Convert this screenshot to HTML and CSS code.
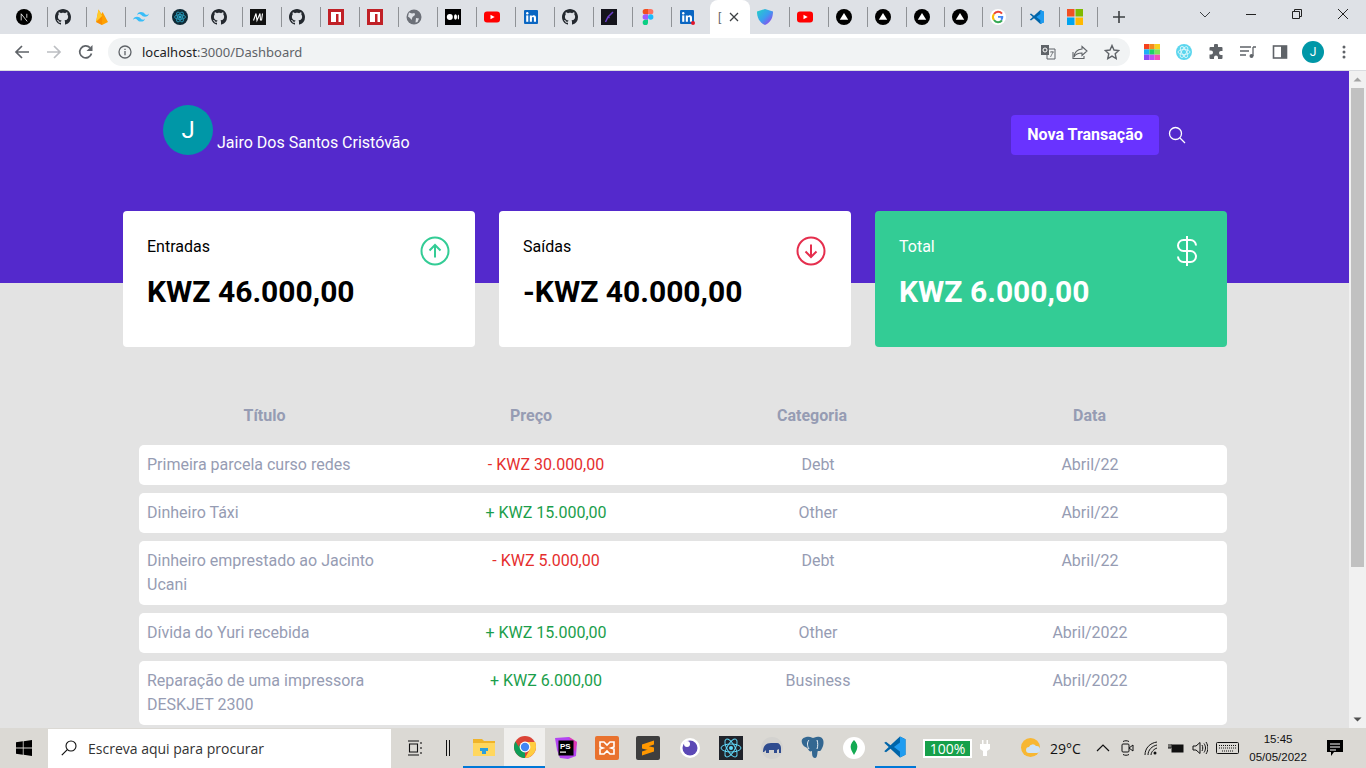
FILE: index.html
```html
<!DOCTYPE html>
<html lang="pt">
<head>
    <meta charset="UTF-8">
    <title>Dashboard</title>
    <link rel="stylesheet" href="styles.css">
</head>
<body>

<svg class="defs" width="0" height="0">
    <symbol id="i-github" viewBox="0 0 16 16"><path fill="#24292f" d="M8 0C3.58 0 0 3.58 0 8c0 3.54 2.29 6.53 5.47 7.59.4.07.55-.17.55-.38 0-.19-.01-.82-.01-1.49-2.01.37-2.53-.49-2.69-.94-.09-.23-.48-.94-.82-1.13-.28-.15-.68-.52-.01-.53.63-.01 1.08.58 1.23.82.72 1.21 1.87.87 2.33.66.07-.52.28-.87.51-1.07-1.78-.2-3.64-.89-3.64-3.95 0-.87.31-1.59.82-2.15-.08-.2-.36-1.02.08-2.12 0 0 .67-.21 2.2.82.64-.18 1.32-.27 2-.27.68 0 1.36.09 2 .27 1.53-1.04 2.2-.82 2.2-.82.44 1.1.16 1.92.08 2.12.51.56.82 1.27.82 2.15 0 3.07-1.87 3.75-3.65 3.95.29.25.54.73.54 1.48 0 1.07-.01 1.93-.01 2.2 0 .21.15.46.55.38A8.013 8.013 0 0016 8c0-4.42-3.58-8-8-8z"/></symbol>
    <symbol id="i-npm" viewBox="0 0 16 16"><rect width="16" height="16" fill="#c12127"/><rect x="3" y="3" width="10" height="10" fill="#fff"/><rect x="8" y="5" width="2.5" height="8" fill="#c12127"/></symbol>
    <symbol id="i-yt" viewBox="0 0 16 16"><rect y="2.5" width="16" height="11" rx="3" fill="#f00"/><path fill="#fff" d="M6.5 5.7l4.2 2.3-4.2 2.3z"/></symbol>
    <symbol id="i-in" viewBox="0 0 16 16"><rect x="1" y="1" width="14" height="14" rx="1" fill="#0a66c2"/><rect x="3.2" y="6.4" width="2.1" height="6.4" fill="#fff"/><circle cx="4.25" cy="4.3" r="1.2" fill="#fff"/><path fill="#fff" d="M6.8 6.4h2v.9c.4-.6 1.1-1.1 2-1.1 1.7 0 2.2 1.1 2.2 2.8v3.8h-2.1V9.4c0-.8-.2-1.4-.9-1.4-.8 0-1.1.6-1.1 1.4v3.4H6.8z"/></symbol>
    <symbol id="i-tri" viewBox="0 0 16 16"><circle cx="8" cy="8" r="8" fill="#000"/><path fill="#fff" d="M8 4l4.2 6.8H3.8z"/></symbol>
    <symbol id="i-vs" viewBox="0 0 16 16"><path fill="#0065a9" d="M11.3 1L15 2.8v10.4L11.3 15 5 9.2 2 11.5.8 10.8 3.8 8 .8 5.2 2 4.500l3 2.300z"/><path fill="#1f9cf0" d="M11.3 1L15 2.8v10.4L11.3 15V11L7.300 8l4-3z"/></symbol>
</svg>

<!-- Browser tabs -->
<div class="tabstrip">
    <div class="tab"><svg viewBox="0 0 16 16"><circle cx="8" cy="8" r="8" fill="#000"/><path d="M5.2 11.4V4.8l6 7.6M10.8 4.8v4" fill="none" stroke="#fff" stroke-width=".8"/></svg></div>
    <div class="tab"><svg><use href="#i-github"/></svg></div>
    <div class="tab"><svg viewBox="0 0 16 16"><path fill="#ffa000" d="M2 13L4.500 .6 7.400 5 8.600 3 14 13 8 16z"/><path fill="#ffca28" d="M2 13L4.500 .6 8.200 7z"/><path fill="#f57c00" d="M8.200 7L2 13l6 3z" opacity=".5"/></svg></div>
    <div class="tab"><svg viewBox="0 0 16 16"><path fill="#38bdf8" d="M8 3c-2.100 0-3.500 1.100-4 3.200.8-1.100 1.700-1.500 2.800-1.200.6.200 1 .6 1.500 1.100C9.100 6.900 10 7.800 12 7.800c2.100 0 3.500-1.100 4-3.200-.8 1.100-1.700 1.500-2.800 1.200-.6-.2-1-.6-1.500-1.100C10.900 3.900 10 3 8 3zM4 7.800c-2.100 0-3.500 1.100-4 3.200.8-1.100 1.700-1.500 2.800-1.200.6.200 1 .6 1.500 1.100.8.800 1.700 1.700 3.700 1.700 2.100 0 3.500-1.100 4-3.200-.8 1.100-1.700 1.500-2.800 1.200-.6-.2-1-.6-1.500-1.100C6.900 8.700 6 7.800 4 7.800z"/></svg></div>
    <div class="tab"><svg viewBox="0 0 16 16"><circle cx="8" cy="8" r="8" fill="#0f2a36"/><circle cx="8" cy="8" r="1.600" fill="#2aa7c9"/><g fill="none" stroke="#2aa7c9" stroke-width=".8"><ellipse cx="8" cy="8" rx="5.500" ry="2.300"/><ellipse cx="8" cy="8" rx="5.500" ry="2.300" transform="rotate(60 8 8)"/><ellipse cx="8" cy="8" rx="5.500" ry="2.300" transform="rotate(120 8 8)"/></g></svg></div>
    <div class="tab"><svg><use href="#i-github"/></svg></div>
    <div class="tab"><svg viewBox="0 0 16 16"><rect width="16" height="16" fill="#111"/><path d="M3.500 11.500L6 4.500 7 11.500 10 4.500 10.500 11.500M12.500 4.500L11.500 11.500" fill="none" stroke="#fff" stroke-width="1.100"/></svg></div>
    <div class="tab"><svg><use href="#i-github"/></svg></div>
    <div class="tab"><svg><use href="#i-npm"/></svg></div>
    <div class="tab"><svg><use href="#i-npm"/></svg></div>
    <div class="tab"><svg viewBox="0 0 16 16"><circle cx="8" cy="8" r="7.500" fill="#6c7078"/><path fill="#dee1e6" d="M3 3.500l3 1 2.500-.5.500 2-2.500 2-1 3-1.500-2-2-1.500zM10 9l3 .5-1.500 3.500-2 .5z"/></svg></div>
    <div class="tab"><svg viewBox="0 0 16 16"><rect width="16" height="16" fill="#000"/><circle cx="4.800" cy="8" r="3" fill="#fff"/><ellipse cx="10.500" cy="8" rx="1.500" ry="2.800" fill="#fff"/><ellipse cx="13.400" cy="8" rx=".7" ry="2.500" fill="#fff"/></svg></div>
    <div class="tab"><svg><use href="#i-yt"/></svg></div>
    <div class="tab"><svg><use href="#i-in"/></svg></div>
    <div class="tab"><svg><use href="#i-github"/></svg></div>
    <div class="tab"><svg viewBox="0 0 16 16"><rect width="16" height="16" fill="#14141c"/><path d="M12 3L7 8l-2.500 5M7 8l1.500 1" fill="none" stroke="#6c3fc9" stroke-width="1.500"/></svg></div>
    <div class="tab"><svg viewBox="0 0 16 16"><path fill="#f24e1e" d="M5.300 0H8v5.300H5.300a2.650 2.650 0 010-5.300z"/><path fill="#ff7262" d="M8 0h2.700a2.650 2.650 0 010 5.300H8z"/><path fill="#a259ff" d="M5.300 5.300H8v5.400H5.300a2.700 2.700 0 010-5.400z"/><circle cx="10.700" cy="8" r="2.700" fill="#1abcfe"/><path fill="#0acf83" d="M5.300 10.700H8v2.600a2.650 2.650 0 11-2.700-2.600z"/></svg></div>
    <div class="tab tab-before"><svg viewBox="0 0 16 16"><use href="#i-in" width="16" height="16"/><circle cx="14" cy="14" r="2" fill="#e0162b"/></svg></div>
    <div class="tab tab-active"><span class="tab-glyph">[</span><svg class="tab-x" viewBox="0 0 10 10"><path d="M1 1l8 8M9 1l-8 8" stroke="#3c4043" stroke-width="1.300"/></svg></div>
    <div class="tab tab-after"><svg viewBox="0 0 16 16"><defs><linearGradient id="shield" x1="0" y1="0" x2="1" y2="1"><stop offset="0" stop-color="#22d3c5"/><stop offset=".5" stop-color="#3b9df0"/><stop offset="1" stop-color="#b02bea"/></linearGradient></defs><path fill="url(#shield)" d="M8 0l8 2.500c0 6.500-2.500 11-8 13.500C2.500 13.500 0 9 0 2.500z"/></svg></div>
    <div class="tab"><svg><use href="#i-yt"/></svg></div>
    <div class="tab"><svg><use href="#i-tri"/></svg></div>
    <div class="tab"><svg><use href="#i-tri"/></svg></div>
    <div class="tab tab-narrow"><svg><use href="#i-tri"/></svg></div>
    <div class="tab tab-narrow"><svg><use href="#i-tri"/></svg></div>
    <div class="tab tab-narrow"><svg viewBox="0 0 16 16"><circle cx="8" cy="8" r="8" fill="#fff"/><path fill="none" stroke="#ea4335" stroke-width="2" d="M12 4.700A5 5 0 004 5"/><path fill="none" stroke="#fbbc05" stroke-width="2" d="M4 5a5 5 0 000 6"/><path fill="none" stroke="#34a853" stroke-width="2" d="M4 11a5 5 0 008 .4"/><path fill="#4285f4" d="M8 7h5.200c.2 2-.3 3.300-1.200 4.400L10.400 10c.4-.4.6-.8.700-1.300H8z"/></svg></div>
    <div class="tab tab-narrow"><svg><use href="#i-vs"/></svg></div>
    <div class="tab tab-narrow"><svg viewBox="0 0 16 16"><rect width="7.500" height="7.500" fill="#f25022"/><rect x="8.500" width="7.500" height="7.500" fill="#7fba00"/><rect y="8.500" width="7.500" height="7.500" fill="#00a4ef"/><rect x="8.500" y="8.500" width="7.500" height="7.500" fill="#ffb900"/></svg></div>
    <svg class="new-tab" viewBox="0 0 12 12"><path d="M6 0v12M0 6h12" stroke="#3c4043" stroke-width="1.600"/></svg>
    <div class="window-controls">
        <div class="win-btn"><svg viewBox="0 0 12 12"><path d="M1 4l5 5 5-5" fill="none" stroke="#3c4043"/></svg></div>
        <div class="win-btn"><svg viewBox="0 0 12 12"><path d="M1 6.500h10" stroke="#222"/></svg></div>
        <div class="win-btn"><svg viewBox="0 0 12 12"><path d="M3.500 3V1.500h7v7H9M1.500 3.500h7v7h-7z" fill="none" stroke="#222"/></svg></div>
        <div class="win-btn"><svg viewBox="0 0 12 12"><path d="M1 1l10 10M11 1L1 11" stroke="#222"/></svg></div>
    </div>
</div>

<!-- Browser toolbar -->
<div class="toolbar">
    <svg class="nav-icon" viewBox="0 0 16 16"><path d="M15 8H2M8 2L2 8l6 6" fill="none" stroke="#5f6368" stroke-width="1.700"/></svg>
    <svg class="nav-icon" viewBox="0 0 16 16"><path d="M1 8h13M8 2l6 6-6 6" fill="none" stroke="#bcbec2" stroke-width="1.700"/></svg>
    <svg class="nav-icon" viewBox="0 0 16 16"><path d="M13.500 9.500A6 6 0 1112 3.700" fill="none" stroke="#5f6368" stroke-width="1.700"/><path fill="#5f6368" d="M14.500 1v6h-6z"/></svg>
    <div class="omnibox">
        <svg class="omni-info" viewBox="0 0 14 14"><circle cx="7" cy="7" r="6" fill="none" stroke="#5f6368" stroke-width="1.300"/><path d="M7 6v4.200M7 3.800v1.200" stroke="#5f6368" stroke-width="1.300"/></svg>
        <span class="url"><span class="url-host">localhost</span>:3000/Dashboard</span>
        <div class="omni-actions">
            <svg viewBox="0 0 16 16"><rect x="1" y="1" width="8" height="10" fill="#5f6368"/><path d="M9 5h6v10H7v-4" fill="none" stroke="#5f6368"/><path d="M10 8h4M12 7v1M10.500 13l2.500-5" stroke="#5f6368" stroke-width=".8"/><circle cx="5" cy="6" r="2" fill="none" stroke="#fff"/></svg>
            <svg viewBox="0 0 16 16"><path d="M10 2.500L15 7l-5 4.500V9C6 9 3.500 10 2 13c.4-4.500 3-7.500 8-8z" fill="none" stroke="#5f6368" stroke-width="1.100"/><path d="M1 8v6.500h11V12" fill="none" stroke="#5f6368" stroke-width="1.100"/></svg>
            <svg viewBox="0 0 16 16"><path d="M8 1.500l2 4.500 4.800.5-3.600 3.200 1 4.800L8 12.100l-4.200 2.400 1-4.800-3.600-3.200L6 6z" fill="none" stroke="#5f6368" stroke-width="1.400"/></svg>
        </div>
    </div>
    <div class="extensions">
        <svg viewBox="0 0 15 15"><rect width="5" height="5" fill="#f5421e"/><rect x="5" width="5" height="5" fill="#f58a1e"/><rect x="10" width="5" height="5" fill="#f7d21e"/><rect y="5" width="5" height="5" fill="#1eb1f5"/><rect x="5" y="5" width="5" height="5" fill="#1ed06a"/><rect x="10" y="5" width="5" height="5" fill="#7fe05a"/><rect y="10" width="5" height="5" fill="#8a4df5"/><rect x="5" y="10" width="5" height="5" fill="#c24df5"/><rect x="10" y="10" width="5" height="5" fill="#f54db8"/></svg>
        <svg viewBox="0 0 16 16"><circle cx="8" cy="8" r="8" fill="#5bd6ee"/><g fill="none" stroke="#d8f6fb" stroke-width=".9"><ellipse cx="8" cy="8" rx="6" ry="2.500"/><ellipse cx="8" cy="8" rx="6" ry="2.500" transform="rotate(60 8 8)"/><ellipse cx="8" cy="8" rx="6" ry="2.500" transform="rotate(120 8 8)"/></g></svg>
        <svg viewBox="0 0 16 16"><path fill="#5f6368" d="M6 1.500a2 2 0 014 0V3h3.500a1 1 0 011 1v3h-1.500a2 2 0 000 4h1.500v3a1 1 0 01-1 1H10v-1.500a2 2 0 00-4 0V15H2.500a1 1 0 01-1-1v-3.500H3a2 2 0 000-4H1.500V4a1 1 0 011-1H6z"/></svg>
        <svg viewBox="0 0 16 16"><path d="M0 3h11M0 7h9M0 11h6M13 3v9M13 3h3" stroke="#5f6368" stroke-width="1.300" fill="none"/><circle cx="11.500" cy="12" r="2" fill="#5f6368"/></svg>
        <svg viewBox="0 0 16 16"><rect x="1.500" y="2" width="13" height="12" fill="none" stroke="#5f6368" stroke-width="1.600"/><rect x="9" y="2" width="5.500" height="12" fill="#5f6368"/></svg>
        <span class="profile">J</span>
        <svg class="kebab" viewBox="0 0 4 16"><circle cx="2" cy="3" r="1.500" fill="#5f6368"/><circle cx="2" cy="8" r="1.500" fill="#5f6368"/><circle cx="2" cy="13" r="1.500" fill="#5f6368"/></svg>
    </div>
</div>

<!-- Page viewport -->
<div class="viewport">
    <div class="page">
        <header class="header">
            <div class="header-content">
                <div class="user">
                    <span class="avatar">J</span>
                    <span class="user-name">Jairo Dos Santos Cristóvão</span>
                </div>
                <div class="header-actions">
                    <button class="new-button">Nova Transação</button>
                    <svg class="search-icon" viewBox="0 0 18 18"><circle cx="7.500" cy="7.500" r="6" fill="none" stroke="#fff" stroke-width="1.300"/><path d="M12 12l5 5" stroke="#fff" stroke-width="1.300"/></svg>
                </div>
            </div>
        </header>

        <main class="main">
            <section class="summary">
                <div class="card">
                    <div class="card-head">
                        <span>Entradas</span>
                        <svg viewBox="0 0 32 32"><circle cx="16" cy="16" r="13.500" fill="none" stroke="#33cc95" stroke-width="2"/><path d="M16 22.500V10M10.500 15.500L16 10l5.500 5.500" fill="none" stroke="#33cc95" stroke-width="2"/></svg>
                    </div>
                    <strong>KWZ 46.000,00</strong>
                </div>
                <div class="card">
                    <div class="card-head">
                        <span>Saídas</span>
                        <svg viewBox="0 0 32 32"><circle cx="16" cy="16" r="13.500" fill="none" stroke="#e52e4d" stroke-width="2"/><path d="M16 9.500V22M10.500 16.500L16 22l5.500-5.500" fill="none" stroke="#e52e4d" stroke-width="2"/></svg>
                    </div>
                    <strong>-KWZ 40.000,00</strong>
                </div>
                <div class="card card-total">
                    <div class="card-head">
                        <span>Total</span>
                        <svg viewBox="0 0 32 32"><path d="M16 1v30M25 10.500A5.500 5.500 0 0019.500 5h-7a5.500 5.500 0 000 11h7a5.500 5.500 0 010 11h-7A5.500 5.500 0 017 21.500" fill="none" stroke="#fff" stroke-width="2"/></svg>
                    </div>
                    <strong>KWZ 6.000,00</strong>
                </div>
            </section>

            <section class="transactions">
                <div class="table-head">
                    <span>Título</span>
                    <span>Preço</span>
                    <span>Categoria</span>
                    <span>Data</span>
                </div>
                <div class="table-row">
                    <span class="cell-title">Primeira parcela curso redes</span>
                    <span class="withdraw">- KWZ 30.000,00</span>
                    <span>Debt</span>
                    <span>Abril/22</span>
                </div>
                <div class="table-row">
                    <span class="cell-title">Dinheiro Táxi</span>
                    <span class="deposit">+ KWZ 15.000,00</span>
                    <span>Other</span>
                    <span>Abril/22</span>
                </div>
                <div class="table-row">
                    <span class="cell-title">Dinheiro emprestado ao Jacinto Ucani</span>
                    <span class="withdraw">- KWZ 5.000,00</span>
                    <span>Debt</span>
                    <span>Abril/22</span>
                </div>
                <div class="table-row">
                    <span class="cell-title">Dívida do Yuri recebida</span>
                    <span class="deposit">+ KWZ 15.000,00</span>
                    <span>Other</span>
                    <span>Abril/2022</span>
                </div>
                <div class="table-row">
                    <span class="cell-title">Reparação de uma impressora DESKJET 2300</span>
                    <span class="deposit">+ KWZ 6.000,00</span>
                    <span>Business</span>
                    <span>Abril/2022</span>
                </div>
            </section>
        </main>
    </div>

    <div class="scrollbar">
        <svg viewBox="0 0 17 17"><path d="M4.500 10.500L8.500 6.500l4 4z" fill="#a3a3a3"/></svg>
        <div class="scroll-track"><div class="scroll-thumb"></div></div>
        <svg viewBox="0 0 17 17"><path d="M4.500 6.500L8.500 10.500l4-4z" fill="#505050"/></svg>
    </div>
</div>

<!-- Windows taskbar -->
<footer class="taskbar">
    <svg class="start" viewBox="0 0 16 16"><path fill="#000" d="M0 2.300l6.800-1v6.300H0zM7.600 1.200L16 0v7.600H7.600zM0 8.400h6.800v6.300l-6.800-1zM7.600 8.400H16V16l-8.400-1.200z"/></svg>
    <div class="search-box">
        <svg viewBox="0 0 16 16"><circle cx="10" cy="6" r="5" fill="none" stroke="#111" stroke-width="1.100"/><path d="M6.300 9.700L.8 15.200" stroke="#111" stroke-width="1.200"/></svg>
        <span>Escreva aqui para procurar</span>
    </div>
    <div class="task-tools">
        <svg viewBox="0 0 16 16"><path d="M1 1h11M1 15h11M2.500 4h8v8h-8zM14 2v2M14 7v2M14 12v2" fill="none" stroke="#111" stroke-width="1.100"/></svg>
        <svg viewBox="0 0 8 16"><path d="M2.500 0v16M5.500 0v16" stroke="#111"/></svg>
    </div>
    <div class="task-apps">
        <div class="app app-open"><svg viewBox="0 0 24 24"><path fill="#f0b429" d="M1 4h9l2 2h11v4H1z"/><path fill="#ffd75e" d="M1 8h22v13H1z"/><path fill="#2c9fdb" d="M8 13h8v3h-2v3h-4v-3H8z"/></svg></div>
        <div class="app app-active"><svg viewBox="0 0 24 24"><circle cx="12" cy="12" r="11" fill="#db4437"/><path fill="#0f9d58" d="M12 23C7.500 23 4 20.300 2.300 17L7 9l5 8z"/><path fill="#0f9d58" d="M1 12c0-2 .5-3.800 1.500-5.500L7 14l-4.700 3C1.500 15.500 1 13.800 1 12z"/><path fill="#ffcd40" d="M12 7h10.400c.4 1.500.6 3 .6 5 0 6-5 11-11 11l5-9z"/><circle cx="12" cy="12" r="5.400" fill="#fff"/><circle cx="12" cy="12" r="4.200" fill="#4285f4"/></svg></div>
        <div class="app"><svg viewBox="0 0 24 24"><path fill="#b345f1" d="M1 2l14-1 8 5-1 14-8 3-8-1-3-8z"/><path fill="#ff318c" d="M15 1l8 5-2 10z" opacity=".6"/><rect x="4.500" y="4.500" width="15" height="15" fill="#000"/><text x="6" y="12.500" class="ps-text">PS</text><rect x="6" y="15.500" width="6" height="1.200" fill="#fff"/></svg></div>
        <div class="app"><svg viewBox="0 0 24 24"><rect width="24" height="24" rx="2" fill="#e9722e"/><path d="M5 6h4l3 3 3-3h4v5l-3 1 3 1v5h-4l-3-3-3 3H5v-5l3-1-3-1z" fill="none" stroke="#fff" stroke-width="1.600"/></svg></div>
        <div class="app"><svg viewBox="0 0 24 24"><rect width="24" height="24" rx="2" fill="#3e3e3e"/><path fill="#ff9800" d="M18 4.500v4L6 12.500v-4zM18 11.500v4L6 19.500v-4zM6 8.500l12 3v4L6 12.500z"/></svg></div>
        <div class="app"><svg viewBox="0 0 24 24"><circle cx="12" cy="12" r="10" fill="#fff"/><circle cx="12" cy="12" r="7.500" fill="#5b48b5"/><circle cx="9" cy="8" r="3" fill="#fff"/></svg></div>
        <div class="app"><svg viewBox="0 0 24 24"><rect width="24" height="24" fill="#20232a"/><circle cx="12" cy="12" r="2" fill="#61dafb"/><g fill="none" stroke="#61dafb"><ellipse cx="12" cy="12" rx="10" ry="4"/><ellipse cx="12" cy="12" rx="10" ry="4" transform="rotate(60 12 12)"/><ellipse cx="12" cy="12" rx="10" ry="4" transform="rotate(120 12 12)"/></g></svg></div>
        <div class="app"><svg viewBox="0 0 24 24"><circle cx="12" cy="12" r="11" fill="#d3d2cf"/><path fill="#2f4c8f" d="M3 16c0-6 3-9 8-9h6c2 0 4 2 4 5v5h-2v-4l-2 1v3h-3v-3H9v3H6v-3l-2 2z"/></svg></div>
        <div class="app"><svg viewBox="0 0 24 24"><path fill="#336791" d="M5 1c5-1 6 1 7 1s3-2 7-1 4 6 3 9c-1 2-2 5-3 5h-2c-1 0 0 7-3 7s-3-4-3-7c-2 1-3 0-4-2S2 11 1 7s1-5 4-6z"/><path d="M8 4c-2 2-2 6 0 9M16 4c1 3 1 6 0 9" stroke="#fff" fill="none" stroke-width=".9"/></svg></div>
        <div class="app"><svg viewBox="0 0 24 24"><circle cx="12" cy="12" r="11" fill="#fff"/><path fill="#13aa52" d="M12 4c3 3 4 6 3 9-.5 2-2 4-3 6-1-2-2.500-4-3-6-1-3 0-6 3-9z"/></svg></div>
        <div class="app app-open"><svg><use href="#i-vs"/></svg></div>
    </div>
    <div class="battery">
        <span class="battery-level">100%</span>
        <svg class="plug" viewBox="0 0 10 16"><path fill="#fff" d="M2 0h1.500v4h3V0H8v4h2v5l-3 2v5H3v-5L0 9V4h2z"/></svg>
    </div>
    <div class="tray">
        <svg class="weather" viewBox="0 0 20 20"><circle cx="9.500" cy="9.500" r="9.500" fill="#f7b733"/><path fill="#cfe3f5" d="M8 15a3 3 0 010-6 4 4 0 017-1 3.500 3.500 0 011 7z"/></svg>
        <span class="temp">29°C</span>
        <svg class="chevron" viewBox="0 0 14 8"><path d="M1 7l6-6 6 6" fill="none" stroke="#111" stroke-width="1.200"/></svg>
        <svg class="tray-icon tray-cam" viewBox="0 0 16 16"><rect x="3" y="4" width="7" height="8" rx="1" fill="none" stroke="#111"/><path d="M10 8l4-3v6zM4 1.500c2-1 4-1 6 0M4 14.500c2 1 4 1 6 0" fill="none" stroke="#111"/></svg>
        <svg class="tray-icon tray-wifi" viewBox="0 0 16 16"><path d="M1 15C1 8 6 3 13 2M4 15C4 10 8 6 13 5M7 15c0-3 3-6 6-7" fill="none" stroke="#111"/><circle cx="11" cy="13" r="1.500" fill="#111"/></svg>
        <svg class="tray-icon" viewBox="0 0 16 16"><rect x="4" y="5" width="11" height="7" fill="#111" stroke="#111"/><path d="M0 8h3M1 4v4M3 4v4" stroke="#111"/></svg>
        <svg class="tray-icon" viewBox="0 0 16 16"><path d="M1 6h3l4-3.500v11L4 10H1z" fill="none" stroke="#111"/><path d="M10 5c1 2 1 4 0 6M12 3.500c2 3 2 6 0 9M14 2c2.500 4 2.500 8 0 12" fill="none" stroke="#111"/></svg>
        <svg class="keyboard" viewBox="0 0 23 12"><rect x=".5" y=".5" width="22" height="11" rx="1" fill="none" stroke="#111"/><path d="M3 3.500h17M3 6h17M6 9h11" stroke="#111" stroke-dasharray="1 1"/></svg>
        <div class="clock"><span>15:45</span><span>05/05/2022</span></div>
        <svg class="notify" viewBox="0 0 18 18"><path fill="#000" d="M1 1h16v12H8l-3 4v-4H1z"/><path d="M4 5h10M4 8h10M4 11h6" stroke="#fff"/></svg>
    </div>
</footer>

</body>
</html>
```

FILE: styles.css
```css
* {
    box-sizing: border-box;
}

body {
    margin: 0;
    width: 1366px;
    height: 768px;
    overflow: hidden;
    display: flex;
    flex-direction: column;
    background-color: #e3e3e3;
    font-family: Roboto, sans-serif;
}

svg {
    display: block;
    flex-shrink: 0;
}

.defs {
    position: absolute;
}

/* Browser tabs */
.tabstrip {
    display: flex;
    align-items: center;
    flex-shrink: 0;
    height: 34px;
    padding-left: 8px;
    background-color: #dee1e6;
}

.tab {
    position: relative;
    flex-shrink: 0;
    display: flex;
    align-items: center;
    width: 39px;
    height: 34px;
    padding-left: 8px;
}

.tab::after {
    content: "";
    position: absolute;
    right: -1px;
    top: 7px;
    width: 1px;
    height: 20px;
    background-color: #8f9296;
}

.tab svg {
    width: 16px;
    height: 16px;
}

.tab-narrow {
    width: 38.4px;
}

.tab-before::after {
    display: none;
}

.tab-active {
    width: 40px;
    background-color: #fff;
    border-radius: 8px 8px 0 0;
}

.tab-active::after {
    display: none;
}

.tab-after {
    width: 38.5px;
    padding-left: 7px;
}

.tab-glyph {
    width: 11px;
    font-family: "Liberation Sans", sans-serif;
    font-size: 12px;
    color: #5f6368;
}

.tab-active .tab-x {
    width: 10px;
    height: 10px;
}

.new-tab {
    width: 12px;
    height: 12px;
    margin-left: 16px;
}

.window-controls {
    display: flex;
    align-self: flex-start;
    margin-left: auto;
}

.win-btn {
    display: flex;
    align-items: center;
    justify-content: center;
    width: 46px;
    height: 28px;
}

.win-btn svg {
    width: 12px;
    height: 12px;
}

/* Browser toolbar */
.toolbar {
    display: flex;
    align-items: center;
    flex-shrink: 0;
    height: 37px;
    padding-left: 14px;
    background-color: #fff;
    border-bottom: 1px solid #dadce0;
}

.nav-icon {
    width: 16px;
    height: 16px;
    margin-right: 16px;
}

.omnibox {
    display: flex;
    align-items: center;
    width: 1022px;
    height: 28px;
    margin-left: -2px;
    padding: 0 10px;
    border-radius: 14px;
    background-color: #f1f3f4;
}

.omni-info {
    width: 14px;
    height: 14px;
    margin-right: 10px;
}

.url {
    font-family: "Noto Sans", sans-serif;
    font-size: 13px;
    color: #5f6368;
}

.url-host {
    color: #202124;
}

.omni-actions {
    display: flex;
    gap: 16px;
    margin-left: auto;
}

.omni-actions svg {
    width: 16px;
    height: 16px;
}

.extensions {
    display: flex;
    align-items: center;
    gap: 16px;
    margin-left: 14px;
}

.extensions svg {
    width: 16px;
    height: 16px;
}

.extensions .kebab {
    width: 4px;
    margin-left: 2px;
}

.profile {
    display: flex;
    align-items: center;
    justify-content: center;
    width: 22px;
    height: 22px;
    margin-left: -2px;
    border-radius: 50%;
    background-color: #0097a7;
    color: #fff;
    font-size: 12px;
}

/* Page viewport */
.viewport {
    flex: 1;
    display: flex;
    min-height: 0;
}

.page {
    flex: 1;
    overflow: hidden;
}

.header {
    height: 212px;
    background-color: #5429cc;
}

.header-content {
    display: flex;
    justify-content: space-between;
    align-items: flex-start;
    padding: 34px 163px 0;
}

.user {
    display: flex;
    align-items: flex-end;
    gap: 4px;
}

.avatar {
    display: flex;
    align-items: center;
    justify-content: center;
    width: 50px;
    height: 50px;
    border-radius: 50%;
    background-color: #0097a7;
    color: #fff;
    font-size: 24px;
}

.user-name {
    color: #fff;
    font-size: 16px;
    line-height: 24px;
}

.header-actions {
    display: flex;
    align-items: center;
    gap: 9px;
    margin-top: 10px;
}

.new-button {
    height: 40px;
    width: 148px;
    padding: 0 0 2px;
    border: none;
    border-radius: 4px;
    background-color: #6933ff;
    color: #fff;
    font-family: Roboto, sans-serif;
    font-size: 16px;
    font-weight: 700;
}

.search-icon {
    width: 18px;
    height: 18px;
}

.main {
    margin-top: -72px;
    padding: 0 122px 0 123px;
}

.summary {
    display: grid;
    grid-template-columns: repeat(3, 352px);
    gap: 24px;
}

.card {
    height: 136px;
    padding: 24px;
    border-radius: 4px;
    background-color: #fff;
    color: #000;
}

.card-head {
    display: flex;
    justify-content: space-between;
    height: 32px;
    line-height: 24px;
}

.card-head svg {
    width: 32px;
    height: 32px;
}

.card strong {
    display: block;
    margin-top: 1px;
    font-size: 30px;
    line-height: 48px;
    font-weight: 700;
}

.card-total {
    background-color: #33cc95;
    color: #fff;
}

.transactions {
    margin: 57px 0 0 16px;
}

.table-head {
    display: grid;
    grid-template-columns: 251px 282px 280px 275px;
    text-align: center;
    color: #969cb3;
    font-weight: 700;
    line-height: 24px;
    margin-bottom: 17px;
}

.table-row {
    display: grid;
    grid-template-columns: 251px 312px 232px 293px;
    margin-bottom: 8px;
    padding: 8px 0;
    border-radius: 5px;
    background-color: #fff;
    color: #969cb3;
    line-height: 24px;
    text-align: center;
}

.table-row > span:last-child {
    padding-left: 19px;
}

.cell-title {
    padding-left: 8px;
    padding-right: 8px;
    text-align: left;
}

.withdraw {
    color: #e52e2e;
}

.deposit {
    color: #1b9e4b;
}

.scrollbar {
    display: flex;
    flex-direction: column;
    width: 17px;
    background-color: #f1f1f1;
}

.scrollbar svg {
    width: 17px;
    height: 17px;
}

.scroll-track {
    flex: 1;
    padding: 0 2px;
}

.scroll-thumb {
    height: 479px;
    background-color: #c1c1c1;
}

/* Windows taskbar */
.taskbar {
    display: flex;
    align-items: center;
    flex-shrink: 0;
    height: 40px;
    background-color: #dbd9d4;
    font-family: "Open Sans", sans-serif;
    color: #111;
}

.start {
    width: 16px;
    height: 16px;
    margin-left: 16px;
}

.search-box {
    display: flex;
    align-items: center;
    flex-shrink: 0;
    width: 343px;
    height: 39px;
    margin-left: 16px;
    padding-left: 13px;
    gap: 11px;
    background-color: #fff;
    font-size: 14px;
    color: #333;
}

.search-box svg {
    width: 16px;
    height: 16px;
}

.task-tools {
    display: flex;
    align-items: center;
    gap: 21px;
    margin-left: 16px;
}

.task-tools svg {
    height: 16px;
    width: 16px;
}

.task-tools svg:last-child {
    width: 8px;
}

.task-apps {
    display: flex;
    flex-shrink: 0;
    margin-left: 11px;
}

.app {
    display: flex;
    align-items: center;
    justify-content: center;
    flex-shrink: 0;
    width: 41.2px;
    height: 40px;
}

.app svg {
    width: 24px;
    height: 24px;
}

.app-open {
    border-bottom: 2px solid #0078d7;
}

.app-active {
    background-color: #f0efed;
    border-bottom: 2px solid #0078d7;
}

.ps-text {
    font-family: "Liberation Sans", sans-serif;
    font-size: 8px;
    font-weight: 700;
    fill: #fff;
}

.battery {
    display: flex;
    align-items: center;
    flex-shrink: 0;
    gap: 8px;
    margin-left: 7px;
}

.battery-level {
    width: 49px;
    height: 19px;
    border: 2px solid #fff;
    background-color: #16a04a;
    color: #fff;
    font-size: 14px;
    line-height: 15px;
    text-align: center;
}

.plug {
    width: 10px;
    height: 16px;
}

.tray {
    display: flex;
    align-items: center;
    margin-left: 31px;
}

.weather {
    width: 20px;
    height: 20px;
}

.temp {
    width: 30px;
    margin-left: 9px;
    font-size: 14px;
    white-space: nowrap;
}

.chevron {
    width: 14px;
    height: 8px;
    margin-left: 16px;
}

.tray-icon {
    width: 16px;
    height: 16px;
    margin-left: 8px;
}

.tray-cam,
.tray-wifi {
    margin-left: 9px;
}

.keyboard {
    width: 23px;
    height: 12px;
    margin-left: 8px;
}

.clock {
    display: flex;
    flex-direction: column;
    align-items: center;
    width: 78px;
    font-family: "Liberation Sans", sans-serif;
    font-size: 11.5px;
    line-height: 18px;
}

.notify {
    width: 18px;
    height: 18px;
    margin-left: 9px;
}
```
